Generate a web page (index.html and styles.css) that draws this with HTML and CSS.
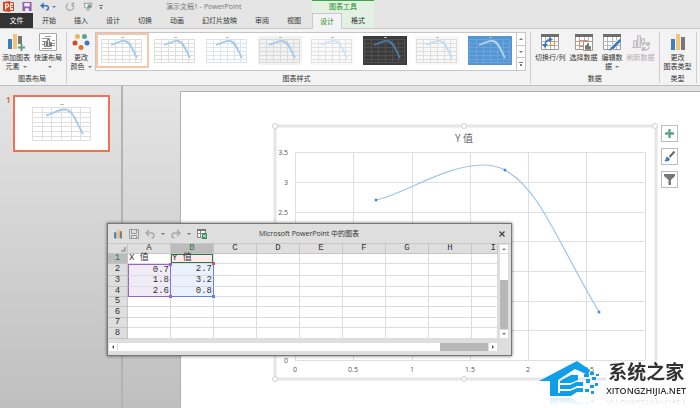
FILE: index.html
```
<!DOCTYPE html>
<html lang="zh-CN">
<head>
  <meta charset="UTF-8">
  <meta name="viewport" content="width=device-width, initial-scale=1.0">
  <title>演示文稿1 - PowerPoint</title>
  <link rel="stylesheet" href="styles.css">
</head>
<body>
  <!-- shared drawings -->
  <svg class="defs" aria-hidden="true">
    <symbol id="mini-chart" viewBox="0 0 44 29">
      <rect class="mini-bg" width="44" height="29"/>
      <path class="mini-grid" d="M1 3.500H42M1 7.500H42M1 11.500H42M1 15.500H42M1 19.500H42M1 23.500H42M1 26.500H42M1.500 3V27M8.500 3V27M15.500 3V27M22.500 3V27M29.500 3V27M35.500 3V27M41.500 3V27"/>
      <path class="mini-title" d="M21 1.500h3"/>
      <path class="mini-line" d="M11 9C16 7.500 20 4.500 25 5C30 5.500 33 14 37 22"/>
    </symbol>
    <symbol id="icon-bars" viewBox="0 0 18 18">
      <path fill="#3f7fbf" d="M2 6h4v11H2z"/>
      <path fill="#f1c477" d="M7 1h4v16H7z"/>
      <path fill="#777" d="M12 4h4v13h-4z"/>
    </symbol>
    <symbol id="icon-table" viewBox="0 0 18 18">
      <path fill="#fff" stroke="#999" d="M.5 3.500h17v13H.5z"/>
      <path fill="#6d6d6d" d="M0 1h18v3H0z"/>
      <path stroke="#b5b5b5" fill="none" d="M0 8.500h18M0 12.500h18M4.500 4v12M9.500 4v12M13.500 4v12"/>
    </symbol>
  </svg>

  <header class="header">
    <div class="header-main">
      <div class="title-row">
        <svg class="app-logo" viewBox="0 0 11 11"><path fill="#d24726" d="M0 1l7-1v11l-7-1z"/><path fill="none" stroke="#d24726" d="M7 1.500h3.500v8H7M8 4.500h2M8 6.500h2"/><path fill="none" stroke="#fff" stroke-width="1.200" d="M2.600 8.500V3h1.500a1.400 1.400 0 0 1 0 3H2.600"/></svg>
        <button class="qa" aria-label="保存"><svg viewBox="0 0 10 10"><path fill="#8b5fb5" d="M0 0h10v10H0z"/><path fill="#f4eefa" d="M2 1h6v4H2zM3 7h4v3H3z"/></svg></button>
        <button class="qa qa-undo" aria-label="撤消"><svg viewBox="0 0 12 10"><path fill="none" stroke="#3b74b8" stroke-width="1.800" d="M2 4h5.500a2.500 2.500 0 0 1 0 5.200"/><path fill="#3b74b8" d="M0 4l4.500-4v8z"/></svg></button>
        <span class="caret"></span>
        <button class="qa qa-redo" aria-label="恢复"><svg viewBox="0 0 10 10"><path fill="none" stroke="#aaa" stroke-width="1.400" d="M3 1.800a4 4 0 1 0 4.500.4M7.500 5V1.500H10"/></svg></button>
        <button class="qa qa-show" aria-label="从头开始"><svg viewBox="0 0 11 11"><path fill="#fff" stroke="#888" d="M0 1.500h11M1.500 2v5h8V2"/><path fill="none" stroke="#888" d="M5.500 7v2M3 10.500l2.500-2 2.500 2"/><circle cx="7" cy="5" r="2.300" fill="#5fa68a"/></svg></button>
        <span class="caret caret-line"></span>
        <span class="doc-title">演示文稿1 - PowerPoint</span>
      </div>
      <nav class="tabs">
        <button class="tab tab-file">文件</button>
        <button class="tab">开始</button>
        <button class="tab">插入</button>
        <button class="tab">设计</button>
        <button class="tab">切换</button>
        <button class="tab">动画</button>
        <button class="tab">幻灯片放映</button>
        <button class="tab">审阅</button>
        <button class="tab">视图</button>
      </nav>
    </div>
    <div class="context">
      <div class="context-title">图表工具</div>
      <nav class="tabs">
        <button class="tab tab-active">设计</button>
        <button class="tab">格式</button>
      </nav>
    </div>
  </header>

  <section class="ribbon">
    <div class="group">
      <div class="group-items">
        <button class="tool">
          <svg viewBox="0 0 18 18"><path fill="#3f7fbf" d="M1 6h4v10H1z"/><path fill="#f1c477" d="M6 1h4v15H6z"/><path fill="#777" d="M11 3h4v8h-4z"/><path fill="none" stroke="#5fa08a" stroke-width="2" d="M14.500 11v7M11 14.500h7"/></svg>
          <span>添加图表<br>元素<i class="caret"></i></span>
        </button>
        <button class="tool">
          <svg viewBox="0 0 18 18"><path fill="#fff" stroke="#a8a8a8" d="M.5.500h17v17H.5z"/><path stroke="#999" fill="none" d="M6 3.500h6M3 5.500h8M3 8.500h2M3 11.500h2M13 7.500h3M13 10.500h3M13 12.500h3M3 15.500h10"/><path fill="#ddd" stroke="#777" d="M5.500 8.500h2v5h-2zM8.500 6.500h2v7h-2zM11.500 9.500h1v4h-1z"/></svg>
          <span>快速布局<br><i class="caret"></i></span>
        </button>
      </div>
      <div class="caption">图表布局</div>
    </div>

    <div class="group group-styles">
      <div class="group-items">
        <button class="tool tool-color">
          <svg viewBox="0 0 18 18"><circle cx="5.500" cy="3.500" r="2.500" fill="#eab65d"/><circle cx="12.500" cy="3.500" r="2.500" fill="#5fa38b"/><circle cx="3" cy="10" r="2.500" fill="#cf4a2b"/><circle cx="15" cy="10" r="2.500" fill="#3d78bd"/><circle cx="9" cy="14.500" r="2.500" fill="#e8731f"/></svg>
          <span>更改<br>颜色<i class="caret"></i></span>
        </button>
        <div class="gallery">
          <button class="style selected" aria-label="样式 1"><svg><use href="#mini-chart"/></svg></button>
          <button class="style" aria-label="样式 2"><svg><use href="#mini-chart"/></svg></button>
          <button class="style style-blue-grid" aria-label="样式 3"><svg><use href="#mini-chart"/></svg></button>
          <button class="style style-gray" aria-label="样式 4"><svg><use href="#mini-chart"/></svg></button>
          <button class="style style-faint" aria-label="样式 5"><svg><use href="#mini-chart"/></svg></button>
          <button class="style style-dark" aria-label="样式 6"><svg><use href="#mini-chart"/></svg></button>
          <button class="style style-shade" aria-label="样式 7"><svg><use href="#mini-chart"/></svg></button>
          <button class="style style-blue" aria-label="样式 8"><svg><use href="#mini-chart"/></svg></button>
          <div class="gallery-nav">
            <button aria-label="上一行" disabled><i class="caret caret-up"></i></button>
            <button aria-label="下一行"><i class="caret"></i></button>
            <button aria-label="其他"><i class="caret caret-line"></i></button>
          </div>
        </div>
      </div>
      <div class="caption">图表样式</div>
    </div>

    <div class="group group-data">
      <div class="group-items">
        <button class="tool">
          <svg viewBox="0 0 18 18"><use href="#icon-table"/><path fill="none" stroke="#e88b4d" d="M9.500 8.500h4v4h-4z"/><path fill="none" stroke="#3b78bd" stroke-width="1.600" d="M4 13C4 9 6 7 9 6.500"/><path fill="#3b78bd" d="M8 4l4 2.500L8 9zM1 11h6l-3 4z"/></svg>
          <span>切换行/列</span>
        </button>
        <button class="tool">
          <svg viewBox="0 0 18 18"><use href="#icon-table"/><path fill="none" stroke="#e88b4d" d="M4.500 7.500h8v6h-8z"/><path fill="#fff" stroke="#999" d="M8.500 8.500h9v9h-9z"/><path fill="#ccc" stroke="#777" d="M10.500 12.500h1v4h-1zM12.500 10.500h1v6h-1zM14.500 13.500h1v3h-1z"/></svg>
          <span>选择数据</span>
        </button>
        <button class="tool">
          <svg viewBox="0 0 18 18"><use href="#icon-table"/><path stroke="#f3f3f3" stroke-width="4" d="M17 7l-9 9"/><path stroke="#3b78bd" stroke-width="2.600" d="M17.500 7l-8.500 8.500"/><path fill="#3b78bd" d="M8 14l2 2-4 2z"/></svg>
          <span>编辑数<br>据<i class="caret"></i></span>
        </button>
        <button class="tool" disabled>
          <svg viewBox="0 0 18 18"><path fill="#e4e0e4" stroke="#c4bfc4" d="M1.500 7.500h3v7h-3zM5.500 2.500h3v12h-3zM9.500 5.500h3v5h-3zM0 14.500h9"/><path fill="none" stroke="#bbb" stroke-width="1.500" d="M10.500 13a3.500 3.500 0 0 1 6-2M17 9v3h-3M17 14a3.500 3.500 0 0 1-6 2M10.500 18v-3h3"/></svg>
          <span>刷新数据</span>
        </button>
      </div>
      <div class="caption">数据</div>
    </div>

    <div class="group group-type">
      <div class="group-items">
        <button class="tool">
          <svg><use href="#icon-bars"/></svg>
          <span>更改<br>图表类型</span>
        </button>
      </div>
      <div class="caption">类型</div>
    </div>
  </section>

  <main class="workspace">
    <aside class="slides">
      <span class="slide-number">1</span>
      <button class="slide-thumb" aria-label="幻灯片 1">
        <svg viewBox="0 0 93 53">
          <path class="mini-grid" d="M17 10.500H76M17 15.500H76M17 20.500H76M17 25.500H76M17 29.500H76M17 34.500H76M17 39.500H76M17 43.500H76M17.500 10V44M27.500 10V44M36.500 10V44M46.500 10V44M56.500 10V44M65.500 10V44M75.500 10V44"/>
          <path class="mini-title" d="M45 7.500h4"/>
          <path class="mini-line" d="M31 18.500C38 17 43 12 50 12.500C58 13 61 25 68 37"/>
        </svg>
      </button>
    </aside>

    <div class="canvas">
      <div class="slide">
        <svg class="chart" width="388" height="262" viewBox="0 0 388 262">
          <rect class="chart-frame" x="3" y="4" width="381" height="253"/>
          <path class="chart-grid" d="M23 30.500H373M23 60.500H373M23 90.500H373M23 119.500H373M23 149.500H373M23 179.500H373M23 208.500H373M23 238.500H373M23.500 30V238M81.500 30V238M140.500 30V238M198.500 30V238M256.500 30V238M314.500 30V238M373.500 30V238"/>
          <text class="chart-title" x="192" y="20">Y 值</text>
          <g class="chart-labels labels-y">
            <text x="16" y="33">3.5</text>
            <text x="16" y="63">3</text>
            <text x="16" y="93">2.5</text>
            <text x="16" y="241">0</text>
          </g>
          <g class="chart-labels">
            <text x="23" y="250">0</text>
            <text x="81" y="250">0.5</text>
            <text x="140" y="250">1</text>
            <text x="198" y="250">1.5</text>
            <text x="256" y="250">2</text>
            <text x="317" y="250">2.5</text>
          </g>
          <path class="chart-line" d="M104 78C133 72 173 43 211 43C219 43 227 45 233 48C268 68 283 115 327 190"/>
          <g class="chart-points">
            <circle cx="104" cy="78" r="1.500"/>
            <circle cx="233" cy="48" r="1.500"/>
            <circle cx="327" cy="190" r="1.500"/>
          </g>
          <g class="chart-handles">
            <circle cx="3" cy="4" r="2.500"/>
            <circle cx="192" cy="4" r="2.500"/>
            <circle cx="383" cy="4" r="2.500"/>
            <circle cx="3" cy="257" r="2.500"/>
            <circle cx="192" cy="257" r="2.500"/>
          </g>
        </svg>

        <div class="chart-tools">
          <button aria-label="图表元素"><svg viewBox="0 0 11 11"><path fill="none" stroke="#5fa38b" stroke-width="2.400" d="M5.500 1v9M1 5.500h9"/></svg></button>
          <button aria-label="图表样式"><svg viewBox="0 0 11 11"><path stroke="#666" stroke-width="2" d="M10.500.500L5.500 6"/><path fill="#3d78bd" d="M3 5.500l3 2.500C5 10.500 2.500 11 0 10c2-.5 1.500-3 3-4.500z"/></svg></button>
          <button aria-label="图表筛选器"><svg viewBox="0 0 11 11"><path fill="#777" d="M0 0h11v2L7 6v5H4.500V6L0 2z"/></svg></button>
        </div>

        <div class="watermark">
          <svg viewBox="0 0 62 36">
            <path fill="#0f9fe8" d="M0 20L38 0l13 9-2 5-13-6-17 11v16H11V20z"/>
            <path fill="#0f9fe8" d="M21 20l11-6h7v5l-7 3H21zM21 24h10l6-3h7v4h-6l-6 3H21zM21 30h10l7-3h6v4h-6l-6 4H13v-3h8zM45 13h5v3h-5zM51 11h4v3h-4zM47 18h4v4h-4zM53 16h4v3h-4zM51 24h4v3h-4zM46 28h4v3h-4zM56 22h3v3h-3zM57 13h3v2h-3zM52 30h3v3h-3z"/>
          </svg>
          <div class="watermark-text">
            <strong>系统之家</strong>
            <span>XITONGZHIJIA.NET</span>
          </div>
        </div>
      </div>

      <section class="sheet">
        <div class="sheet-title">
          <div class="sheet-tools">
            <svg viewBox="0 0 18 18"><use href="#icon-bars"/></svg>
            <button aria-label="保存"><svg viewBox="0 0 10 10"><path fill="none" stroke="#999" d="M.5.500h9v9h-9zM2.500.500v4h5v-4M2.500 9.500v-3h5v3"/></svg></button>
            <button aria-label="撤消"><svg viewBox="0 0 10 10"><path fill="none" stroke="#aaa" stroke-width="1.500" d="M4 1L1 4l3 3M1 4h5.500a2.500 2.500 0 0 1 0 5"/></svg></button>
            <i class="caret"></i>
            <button aria-label="恢复"><svg viewBox="0 0 10 10"><path fill="none" stroke="#aaa" stroke-width="1.500" d="M6 1l3 3-3 3M9 4H3.500a2.500 2.500 0 0 0 0 5"/></svg></button>
            <i class="caret"></i>
            <button aria-label="在 Excel 中编辑数据"><svg viewBox="0 0 10 10"><path fill="#fff" stroke="#888" d="M.5 1.500h8v7h-8zM.5 4.500h8M3.500 2v6"/><path fill="#777" d="M0 0h9v2H0z"/><path fill="#2e8b57" d="M5 4h5v6H5z"/><path stroke="#fff" d="M6 5.500l3 3M9 5.500l-3 3"/></svg></button>
          </div>
          <h2>Microsoft PowerPoint 中的图表</h2>
          <button class="close" aria-label="关闭"><svg viewBox="0 0 6 6"><path stroke="#444" stroke-width="1.300" d="M.5.500l5 5M5.500.500l-5 5"/></svg></button>
        </div>
        <div class="sheet-body">
          <table>
            <thead>
              <tr><th class="corner"></th><th>A</th><th class="current">B</th><th>C</th><th>D</th><th>E</th><th>F</th><th>G</th><th>H</th><th class="cut">I</th></tr>
            </thead>
            <tbody>
              <tr><th class="current">1</th><td>X 值</td><td class="cell-active">Y 值</td><td></td><td></td><td></td><td></td><td></td><td></td><td></td></tr>
              <tr><th>2</th><td class="num range-x first">0.7</td><td class="num range-y">2.7</td><td></td><td></td><td></td><td></td><td></td><td></td><td></td></tr>
              <tr><th>3</th><td class="num range-x">1.8</td><td class="num range-y">3.2</td><td></td><td></td><td></td><td></td><td></td><td></td><td></td></tr>
              <tr><th>4</th><td class="num range-x last">2.6</td><td class="num range-y last">0.8</td><td></td><td></td><td></td><td></td><td></td><td></td><td></td></tr>
              <tr><th>5</th><td></td><td></td><td></td><td></td><td></td><td></td><td></td><td></td><td></td></tr>
              <tr><th>6</th><td></td><td></td><td></td><td></td><td></td><td></td><td></td><td></td><td></td></tr>
              <tr><th>7</th><td></td><td></td><td></td><td></td><td></td><td></td><td></td><td></td><td></td></tr>
              <tr><th>8</th><td></td><td></td><td></td><td></td><td></td><td></td><td></td><td></td><td></td></tr>
            </tbody>
          </table>
          <div class="scroll scroll-v">
            <button aria-label="向上"><i class="caret caret-up"></i></button>
            <div class="track"><div class="thumb"></div></div>
            <button aria-label="向下"><i class="caret"></i></button>
          </div>
        </div>
        <div class="scroll scroll-h">
          <button aria-label="向左"><i class="caret caret-left"></i></button>
          <div class="track"><div class="thumb"></div></div>
          <button aria-label="向右"><i class="caret caret-right"></i></button>
        </div>
      </section>
    </div>
  </main>
</body>
</html>
```

FILE: styles.css
```
* {
  box-sizing: border-box;
}

body {
  display: flex;
  flex-direction: column;
  min-height: 100vh;
  margin: 0;
  font-family: "Open Sans", "Noto Sans CJK SC", sans-serif;
  font-size: 7px;
  line-height: 9px;
  color: #333;
  background: #e5e5e5;
}

button {
  padding: 0;
  border: 0;
  background: none;
  color: inherit;
  font: inherit;
}

svg {
  display: block;
}

.defs {
  position: absolute;
  width: 0;
  height: 0;
}

.caret {
  display: inline-block;
  width: 0;
  height: 0;
  border: 2px solid transparent;
  border-top: 2px solid #777;
  border-bottom: 0;
  vertical-align: middle;
}

.tool .caret {
  margin-left: 3px;
}

.caret-up {
  border-top: 0;
  border-bottom: 2px solid #777;
}

.caret-left {
  border: 2px solid transparent;
  border-right-color: #555;
  border-left: 0;
}

.caret-right {
  border: 2px solid transparent;
  border-left-color: #555;
  border-right: 0;
}

.caret-line {
  width: 4px;
  height: 4px;
  border: 0;
  border-top: 1px solid #777;
  background: linear-gradient(#777, #777) center bottom / 2px 2px no-repeat;
}

/* Header */
.header {
  display: flex;
  height: 28px;
}

.header-main {
  display: flex;
  flex-direction: column;
  width: 312px;
}

.title-row {
  display: flex;
  align-items: center;
  height: 13px;
  padding-left: 3px;
}

.app-logo {
  width: 11px;
  height: 11px;
}

.qa {
  margin-left: 8px;
}

.qa svg {
  width: 10px;
  height: 9px;
}

.qa-undo {
  margin-right: 2px;
}

.qa-redo {
  margin-left: 9px;
}

.qa-show {
  margin-right: 6px;
}

.doc-title {
  margin-left: 63px;
  color: #777;
}

.tabs {
  display: flex;
  height: 15px;
}

.tab {
  padding: 0 9px;
  line-height: 14px;
  white-space: nowrap;
}

.tab-file {
  width: 33px;
  background: #333;
  color: #fff;
}

.context {
  border-top: 1px solid #3fa648;
  background: #e3f1e4;
}

.context-title {
  height: 12px;
  line-height: 11px;
  text-align: center;
  color: #1e8e27;
}

.tab-active {
  height: 16px;
  padding: 0 7px;
  border: 1px solid #c9c9c9;
  border-bottom: 0;
  background: #f3f3f3;
  color: #1e8e27;
  line-height: 13px;
  z-index: 1;
}

/* Ribbon */
.ribbon {
  display: flex;
  height: 58px;
  border-top: 1px solid #c9c9c9;
  border-bottom: 1px solid #bdbdbd;
  background: #f3f3f3;
}

.group {
  display: flex;
  flex-direction: column;
  justify-content: space-between;
  margin: 3px 0 2px;
  padding-right: 2px;
  border-right: 1px solid #cfcfcf;
}

.group-items {
  display: flex;
}

.caption {
  text-align: center;
}

.tool {
  display: flex;
  flex-direction: column;
  align-items: center;
  gap: 2px;
  padding: 1px 2px 0;
  white-space: nowrap;
}

.tool:disabled {
  color: #b3aeb3;
}

.tool svg {
  width: 18px;
  height: 18px;
}

.tool-color {
  width: 28px;
}

.group-styles {
  padding-right: 4px;
}

.group-data {
  padding: 0 2px;
}

.group-type {
  padding: 0 2px;
}

.gallery {
  display: flex;
  width: 431px;
  border: 1px solid #c6c6c6;
  background: #fff;
}

.style {
  flex: 1;
  height: 35px;
  padding: 0 3px;
  border: 1px solid transparent;
}

.style svg {
  width: 44px;
  height: 29px;
}

.style.selected {
  border: 2px solid #fbc4a6;
  padding: 0 2px;
}

.gallery-nav {
  display: flex;
  flex-direction: column;
  width: 9px;
  border-left: 1px solid #c6c6c6;
}

.gallery-nav button {
  display: flex;
  flex: 1;
  align-items: center;
  justify-content: center;
}

.gallery-nav button + button {
  border-top: 1px solid #c6c6c6;
}

.mini-bg {
  fill: var(--mini-bg, #fff);
}

.mini-grid {
  fill: none;
  stroke: var(--mini-grid, #dedede);
}

.mini-title {
  stroke: #bbb;
}

.mini-line {
  fill: none;
  stroke: var(--mini-line, #a3caec);
  stroke-width: 1.8;
}

.style-blue-grid {
  --mini-grid: #dbe4ef;
}

.style-gray {
  --mini-bg: #f2f2f2;
  --mini-grid: #dadada;
}

.style-faint {
  --mini-bg: #fafafa;
  --mini-grid: #e2e2e2;
  --mini-line: #d3e5f4;
}

.style-dark {
  --mini-bg: #3c3c3c;
  --mini-grid: #505050;
  --mini-line: #4d7aa6;
}

.style-shade {
  --mini-bg: #f8f8f8;
  --mini-line: #c3dcf1;
}

.style-blue {
  --mini-bg: #5496d3;
  --mini-grid: #6ba4da;
  --mini-line: #b4d3ef;
}

/* Workspace */
.workspace {
  display: flex;
  flex: 1;
  background: linear-gradient(#e5e5e5, #bfbfbf);
}

.slides {
  display: flex;
  align-items: flex-start;
  gap: 4px;
  width: 123px;
  padding: 9px 0 0 6px;
  border-right: 2px solid #b3b3b3;
}

.slide-number {
  width: 3px;
  color: #e0694c;
  font-size: 8px;
  font-weight: bold;
}

.slide-thumb {
  width: 97px;
  height: 57px;
  border: 2px solid #ee7355;
  background: #fff;
}

.slide-thumb svg {
  width: 100%;
}

.canvas {
  position: relative;
  display: flex;
  flex: 1;
  padding: 5px 0 0 57px;
}

.slide {
  position: relative;
  flex: 1;
  border-top: 1px solid #b0b0b0;
  border-left: 1px solid #b0b0b0;
  background: #fff;
}

/* Chart on the slide */
.chart {
  position: absolute;
  top: 30px;
  left: 91px;
}

.chart-frame {
  fill: #fff;
  stroke: #e6e6e6;
  stroke-width: 3;
}

.chart-grid {
  fill: none;
  stroke: #dfdfdf;
}

.chart-title {
  fill: #666;
  font-size: 10px;
  text-anchor: middle;
}

.chart-labels {
  fill: #555;
  text-anchor: middle;
}

.labels-y {
  text-anchor: end;
}

.chart-line {
  fill: none;
  stroke: #9dc5ea;
  stroke-width: 1.2;
}

.chart-points {
  fill: #4a90d0;
}

.chart-handles {
  fill: #fff;
  stroke: #cfcfcf;
}

.chart-tools {
  position: absolute;
  top: 33px;
  left: 480px;
  display: flex;
  flex-direction: column;
  gap: 6px;
}

.chart-tools button {
  display: flex;
  align-items: center;
  justify-content: center;
  width: 17px;
  height: 17px;
  border: 1px solid #bdbdbd;
  background: #fff;
}

.chart-tools svg {
  width: 11px;
  height: 11px;
}

.watermark {
  position: absolute;
  right: 14px;
  bottom: 11px;
  display: flex;
  gap: 5px;
  -webkit-box-reflect: below 0 linear-gradient(transparent 75%, rgba(0, 0, 0, 0.2));
}

.watermark svg {
  width: 62px;
  height: 36px;
}

.watermark-text {
  display: flex;
  flex-direction: column;
  background: #fff;
  color: #333;
}

.watermark-text strong {
  padding-left: 2px;
  font-size: 19px;
  line-height: 23px;
}

.watermark-text span {
  font-size: 9px;
  font-weight: 600;
  line-height: 13px;
}

/* Data sheet window */
.sheet {
  position: absolute;
  top: 137px;
  left: -16px;
  display: flex;
  flex-direction: column;
  width: 405px;
  border: 1px solid #777;
  background: #dedede;
  box-shadow: 0 0 3px rgba(0, 0, 0, 0.6);
}

.sheet-title {
  display: flex;
  align-items: center;
  height: 20px;
  padding: 0 6px 0 5px;
  border-bottom: 1px solid #c8c8c8;
}

.sheet-tools {
  display: flex;
  align-items: center;
  gap: 6px;
  flex: 1;
}

.sheet-tools svg {
  width: 10px;
  height: 10px;
}

.sheet-title h2 {
  margin: 0;
  font-size: 7px;
  font-weight: normal;
}

.close {
  display: flex;
  flex: 1;
  justify-content: flex-end;
}

.close svg {
  width: 6px;
  height: 6px;
}

.sheet-body {
  display: flex;
  gap: 2px;
}

table {
  width: 390px;
  height: 95px;
  table-layout: fixed;
  border-collapse: separate;
  border-spacing: 0;
  background: #fff;
  font-family: "Liberation Mono", "Noto Sans CJK SC", monospace;
  font-size: 9px;
  line-height: 9px;
}

th,
td {
  position: relative;
  width: 43px;
  padding: 0 1px;
  border-right: 1px solid #dcdcdc;
  border-bottom: 1px solid #dcdcdc;
  white-space: nowrap;
}

td {
  text-align: left;
}

th {
  background: #dedede;
  border-color: #c4c4c4;
  font-weight: normal;
}

.corner {
  width: 20px;
  background: linear-gradient(135deg, transparent 50%, #aaa 50%) 12px 2px / 6px 6px no-repeat #dedede;
}

.current {
  background: #bcbcbc;
  color: #2c7a4b;
}

.cut {
  width: 26px;
  text-align: right;
}

.num {
  text-align: right;
}

.cell-active {
  background: #fdeaea;
  box-shadow: inset 0 0 0 1px #2c7a4b;
}

.range-x {
  background: #f0ebf7;
  border-left: 1px solid #9467bd;
  border-right: 1px solid #9467bd;
}

.range-x.first {
  border-top: 1px solid #9467bd;
}

.range-x.last {
  border-bottom: 1px solid #9467bd;
}

.range-y {
  background: #ebf1fc;
  border-right: 1px solid #5b86e5;
}

.range-y.last {
  border-bottom: 1px solid #5b86e5;
}

.range-x.first::after,
.range-x.last::after,
.range-y.last::after,
.cell-active::after {
  content: '';
  position: absolute;
  right: -2px;
  bottom: -2px;
  z-index: 1;
  width: 3px;
  height: 3px;
  background: #9467bd;
}

.range-x.first::after {
  top: -2px;
}

.range-y.last::after {
  background: #5b86e5;
}

.cell-active::after {
  background: #e84c4c;
}

/* Scroll bars */
.scroll {
  display: flex;
  gap: 1px;
}

.scroll button {
  display: flex;
  align-items: center;
  justify-content: center;
  width: 8px;
  height: 8px;
  background: #fff;
}

.scroll .track {
  flex: 1;
  background: #b8b8b8;
}

.scroll .thumb {
  background: #fff;
}

.scroll-v {
  flex-direction: column;
  width: 8px;
  padding: 1px 0;
}

.scroll-v .thumb {
  height: 34%;
}

.scroll-h {
  width: 390px;
  margin: 4px 0;
  padding: 0 1px;
}

.scroll-h .thumb {
  width: 87%;
  height: 8px;
}
```
